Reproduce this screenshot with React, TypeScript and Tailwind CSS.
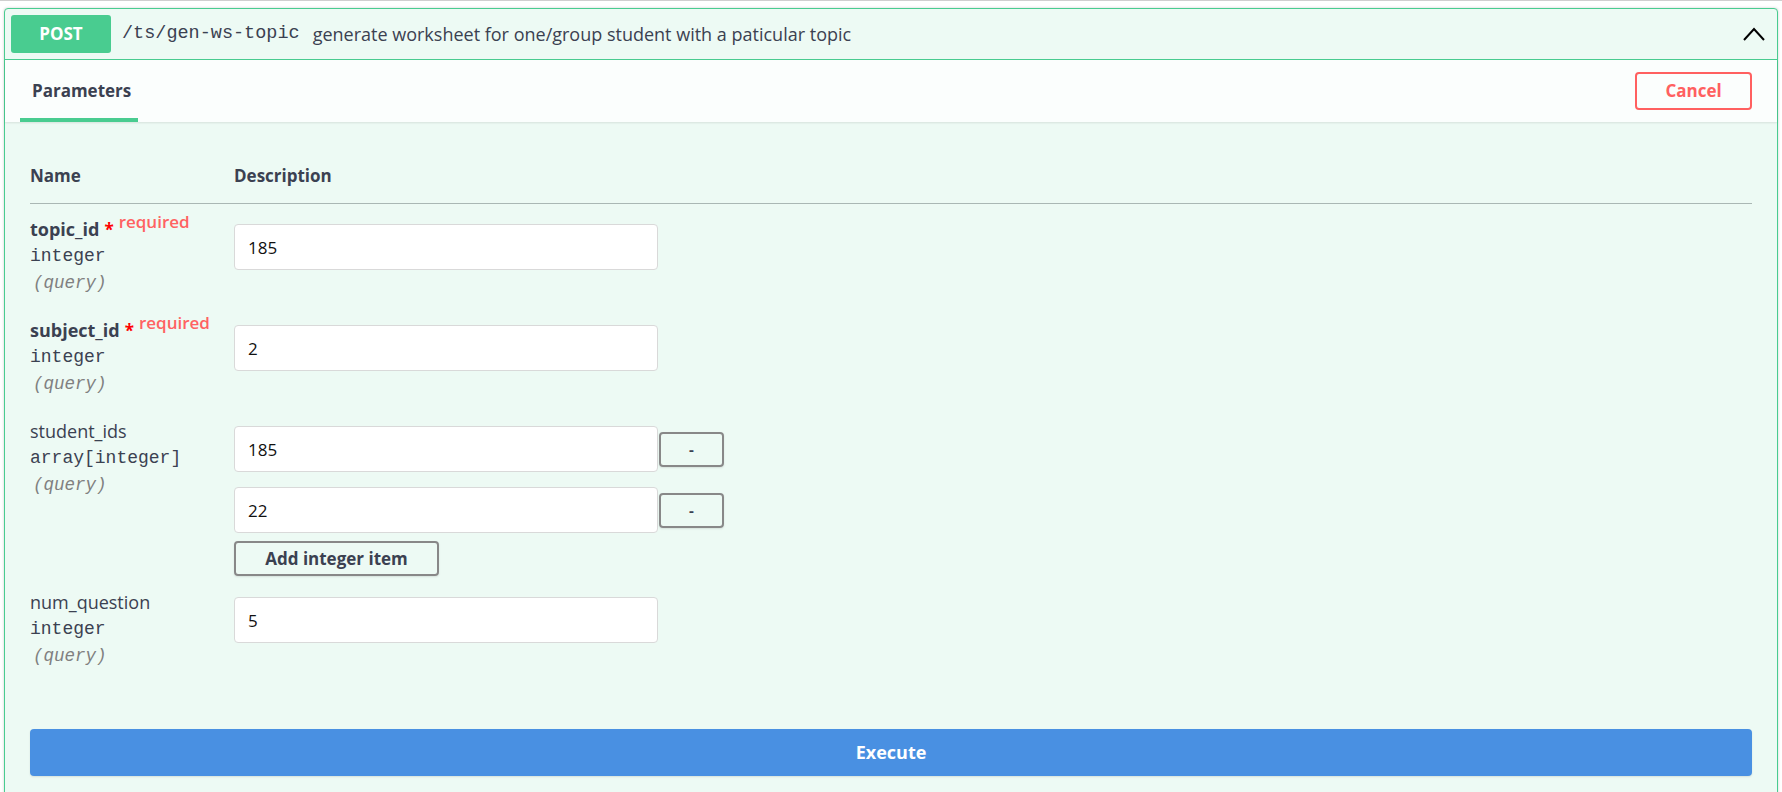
import React from "react";

const mono = "font-['Liberation_Mono','DejaVu_Sans_Mono',monospace]";

interface Param {
  name: string;
  type: string;
  required?: boolean;
  values: string[];
  isArray?: boolean;
}

const params: Param[] = [
  { name: "topic_id", type: "integer", required: true, values: ["185"] },
  { name: "subject_id", type: "integer", required: true, values: ["2"] },
  { name: "student_ids", type: "array[integer]", values: ["185", "22"], isArray: true },
  { name: "num_question", type: "integer", values: ["5"] },
];

const ParamInput = ({ value }: { value: string }) => (
  <input
    type="text"
    defaultValue={value}
    className="h-[46px] w-[424px] rounded-[4px] border border-[#d9d9d9] bg-white pl-[13px] text-[17px] text-[#111] outline-none"
  />
);

const ParamRow = ({ param }: { param: Param }) => (
  <div className="flex items-start pt-[12px]">
    <div className="w-[204px] shrink-0 pb-[8px]">
      <div className="flex h-[27px] items-center text-[18px] leading-[27px] text-[#3b4151]">
        <span className={param.required ? "font-bold" : ""}>{param.name}</span>
        {param.required && (
          <>
            <span className="ml-[5px] text-[17px] font-bold text-[#ff0000]">*</span>
            <span className="relative -top-[8px] ml-[5px] text-[17px] font-semibold text-[#ff6262]">
              required
            </span>
          </>
        )}
      </div>
      <div className={`${mono} h-[27px] text-[18px] leading-[27px] text-[#3b4151]`}>
        {param.type}
      </div>
      <div className={`${mono} h-[27px] pl-[3px] text-[17.5px] italic leading-[27px] text-[#808080]`}>
        (query)
      </div>
    </div>
    <div className="flex flex-col pt-[8px]">
      {param.isArray ? (
        <>
          {param.values.map((v, i) => (
            <div key={i} className={`flex items-center ${i > 0 ? "mt-[15px]" : ""}`}>
              <ParamInput value={v} />
              <button
                type="button"
                className="ml-[1px] h-[35px] w-[65px] rounded-[4px] border-2 border-[#888] text-[15px] font-bold text-[#3b4151] shadow-[0_1px_2px_rgba(0,0,0,0.1)]"
              >
                -
              </button>
            </div>
          ))}
          <button
            type="button"
            className="mt-[8px] mb-[1px] h-[35px] w-[205px] rounded-[4px] border-2 border-[#888] text-[17px] font-bold text-[#3b4151] shadow-[0_1px_2px_rgba(0,0,0,0.1)]"
          >
            Add integer item
          </button>
        </>
      ) : (
        <ParamInput value={param.values[0]} />
      )}
    </div>
  </div>
);

const App = () => {
  return (
    <div className="min-h-screen bg-white font-['Open_Sans','Liberation_Sans',sans-serif] text-[#3b4151]">
      <div className="h-px bg-[#cfcfcf]" />
      <div className="mx-1 mt-[7px] rounded-[4px] border border-[#49cc90] bg-[#edfaf4] shadow-[0_0_3px_rgba(0,0,0,0.19)]">
        {/* summary bar */}
        <div className="flex items-center border-b border-[#49cc90] p-[6px]">
          <span className="flex h-[38px] w-[100px] items-center justify-center rounded-[3px] bg-[#49cc90] text-[17px] font-bold text-white">
            POST
          </span>
          <span className={`${mono} ml-[11px] text-[18.5px] text-[#3b4151]`}>/ts/gen-ws-topic</span>
          <span className="ml-[13px] text-[18px] text-[#3b4151]">
            generate worksheet for one/group student with a paticular topic
          </span>
          <svg className="ml-auto mr-[6px]" width="22" height="14" viewBox="0 0 22 14" fill="none">
            <path d="M1 13 L11 2 L21 13" stroke="#000" strokeWidth="2" />
          </svg>
        </div>

        {/* tab bar */}
        <div className="flex h-[62px] items-center justify-between bg-white/80 pl-[15px] pr-[25px] shadow-[0_1px_2px_rgba(0,0,0,0.1)]">
          <div className="relative flex h-full w-[118px] items-center pl-[12px]">
            <span className="text-[17px] font-bold">Parameters</span>
            <div className="absolute bottom-0 left-0 right-0 h-[4px] bg-[#49cc90]" />
          </div>
          <button
            type="button"
            className="h-[38px] w-[117px] rounded-[4px] border-2 border-[#ff6060] text-[17px] font-bold text-[#ff6060]"
          >
            Cancel
          </button>
        </div>

        {/* parameters */}
        <div className="px-[25px]">
          <div className="flex border-b border-[#aab7b4] pt-[42px] pb-[15px] text-[17px] font-bold leading-[24px]">
            <div className="w-[204px]">Name</div>
            <div>Description</div>
          </div>
          {params.map((p) => (
            <ParamRow key={p.name} param={p} />
          ))}
          <button
            type="button"
            className="mt-[51px] h-[47px] w-full rounded-[4px] bg-[#4990e2] text-[18px] font-bold text-white shadow-[0_1px_2px_rgba(0,0,0,0.1)]"
          >
            Execute
          </button>
          <div className="h-[30px]" />
        </div>
      </div>
    </div>
  );
};

export default App;
